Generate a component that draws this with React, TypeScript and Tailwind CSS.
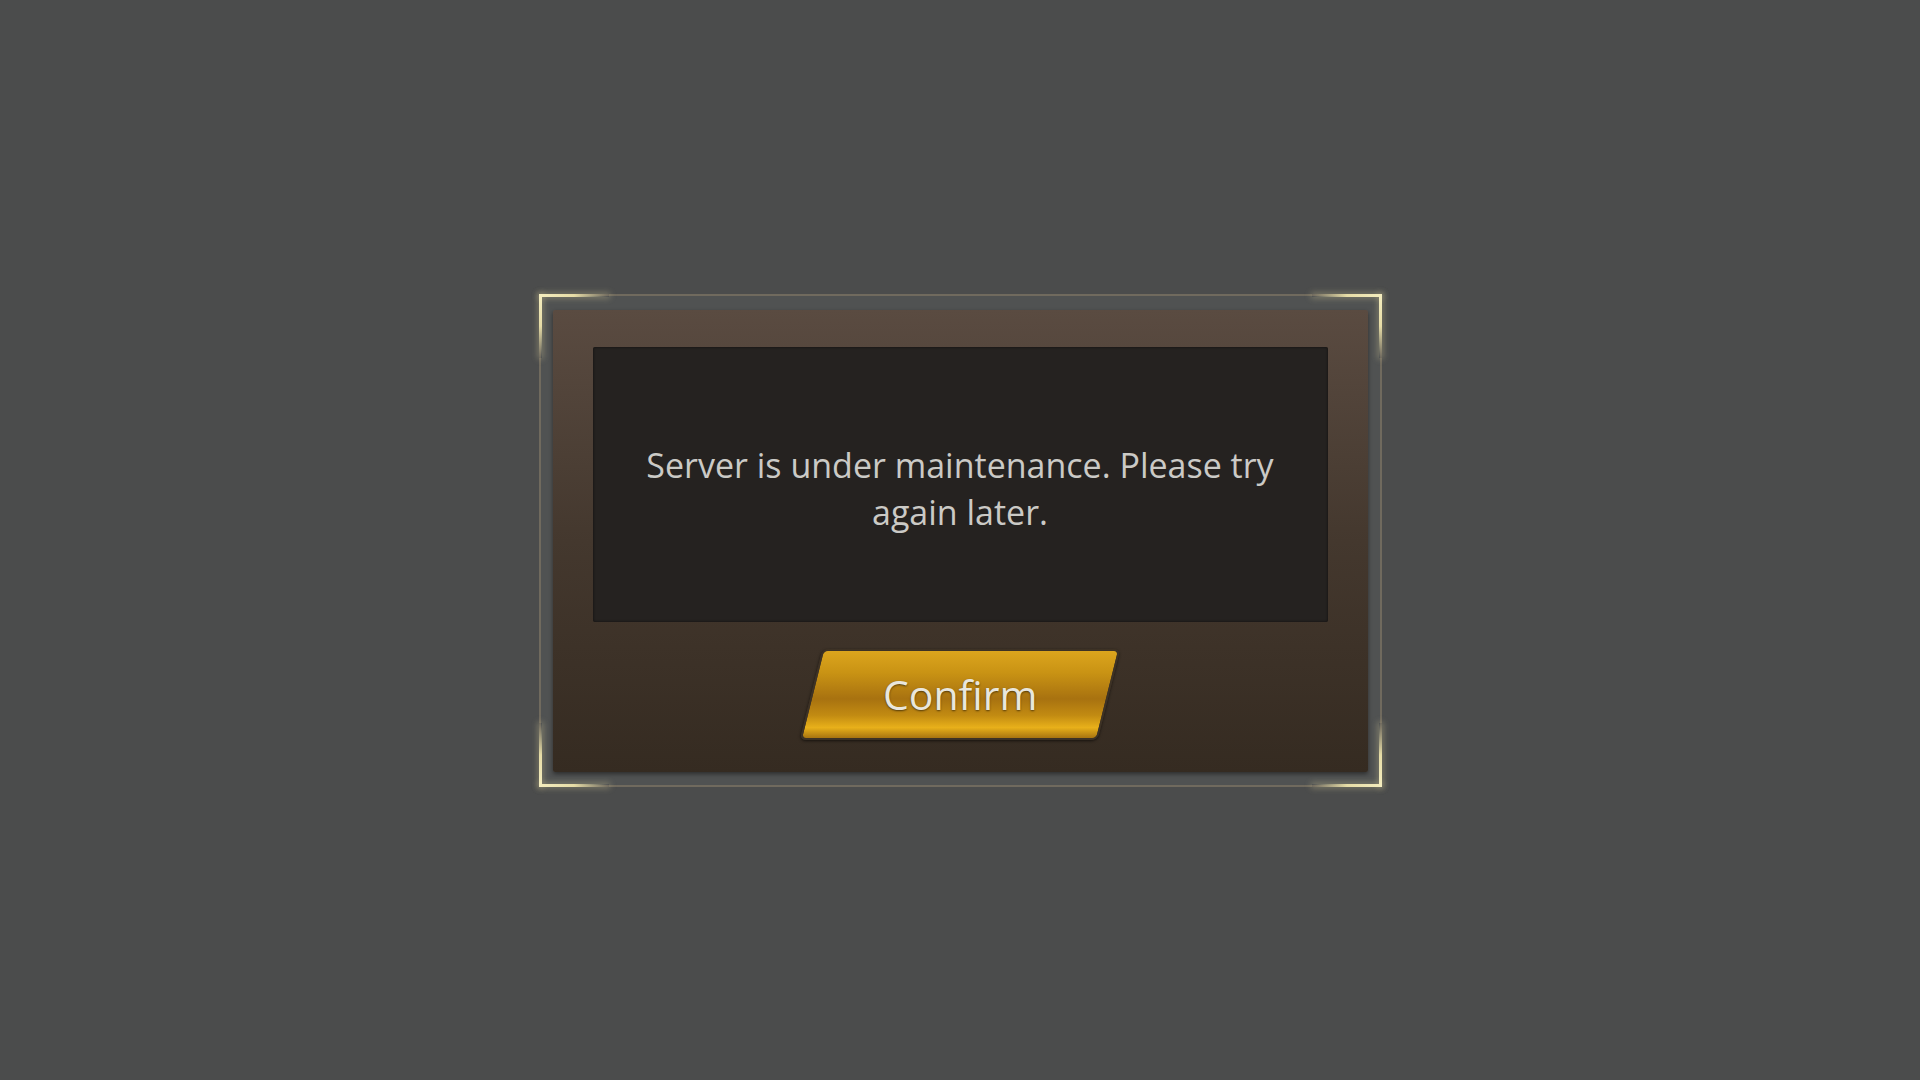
function Corner({ pos }: { pos: "tl" | "tr" | "bl" | "br" }) {
  const h =
    pos === "tl"
      ? "left-[-2px] top-[-2px] bg-gradient-to-r"
      : pos === "tr"
      ? "right-[-2px] top-[-2px] bg-gradient-to-l"
      : pos === "bl"
      ? "left-[-2px] bottom-[-2px] bg-gradient-to-r"
      : "right-[-2px] bottom-[-2px] bg-gradient-to-l";
  const v =
    pos === "tl"
      ? "left-[-2px] top-[-2px] bg-gradient-to-b"
      : pos === "tr"
      ? "right-[-2px] top-[-2px] bg-gradient-to-b"
      : pos === "bl"
      ? "left-[-2px] bottom-[-2px] bg-gradient-to-t"
      : "right-[-2px] bottom-[-2px] bg-gradient-to-t";
  return (
    <>
      <span className={`pointer-events-none absolute h-[3px] w-[70px] ${h} from-[#f4edbf] via-[#e6dca6] to-transparent shadow-[0_0_6px_1px_rgba(240,230,170,0.35)]`} />
      <span className={`pointer-events-none absolute h-[64px] w-[3px] ${v} from-[#f4edbf] via-[#e6dca6] to-transparent shadow-[0_0_6px_1px_rgba(240,230,170,0.35)]`} />
    </>
  );
}

export default function App() {
  return (
    <div
      className="flex h-screen w-full items-center justify-center bg-[#4b4c4c]"
      style={{ fontFamily: '"Open Sans", "Noto Sans", sans-serif' }}
    >
      <div className="relative h-[493px] w-[843px] border-[2px] border-[#706a5e] bg-[#505252] px-[12px] pb-[13px] pt-[14px]">
        <Corner pos="tl" />
        <Corner pos="tr" />
        <Corner pos="bl" />
        <Corner pos="br" />

        <div className="flex h-full flex-col items-center rounded-[2px] bg-gradient-to-b from-[#5a4b41] via-[#44382e] to-[#352b21] px-[40px] pt-[37px] shadow-[0_2px_4px_rgba(0,0,0,0.45)]">
          <div className="flex h-[275px] w-full items-center justify-center rounded-[2px] bg-[#252220] px-[36px] pt-[9px] shadow-[inset_0_0_3px_rgba(0,0,0,0.6)]">
            <p className="max-w-[670px] text-center text-[34px] leading-[47px] text-[#cbcac6]">
              Server is under maintenance. Please try again later.
            </p>
          </div>

          <button className="mt-[27px] flex h-[91px] w-[298px] -skew-x-[14deg] items-center justify-center rounded-[6px] border-[2px] border-[#3d3225] bg-[linear-gradient(180deg,#dca51d_0%,#c99314_25%,#a87210_55%,#c28b12_74%,#e8b01a_88%,#a87410_100%)] shadow-[0_1px_3px_rgba(0,0,0,0.6)]">
            <span className="skew-x-[14deg] text-[41px] text-[#e9e6dc] [text-shadow:0_1px_2px_rgba(0,0,0,0.55)]">
              Confirm
            </span>
          </button>
        </div>
      </div>
    </div>
  );
}
